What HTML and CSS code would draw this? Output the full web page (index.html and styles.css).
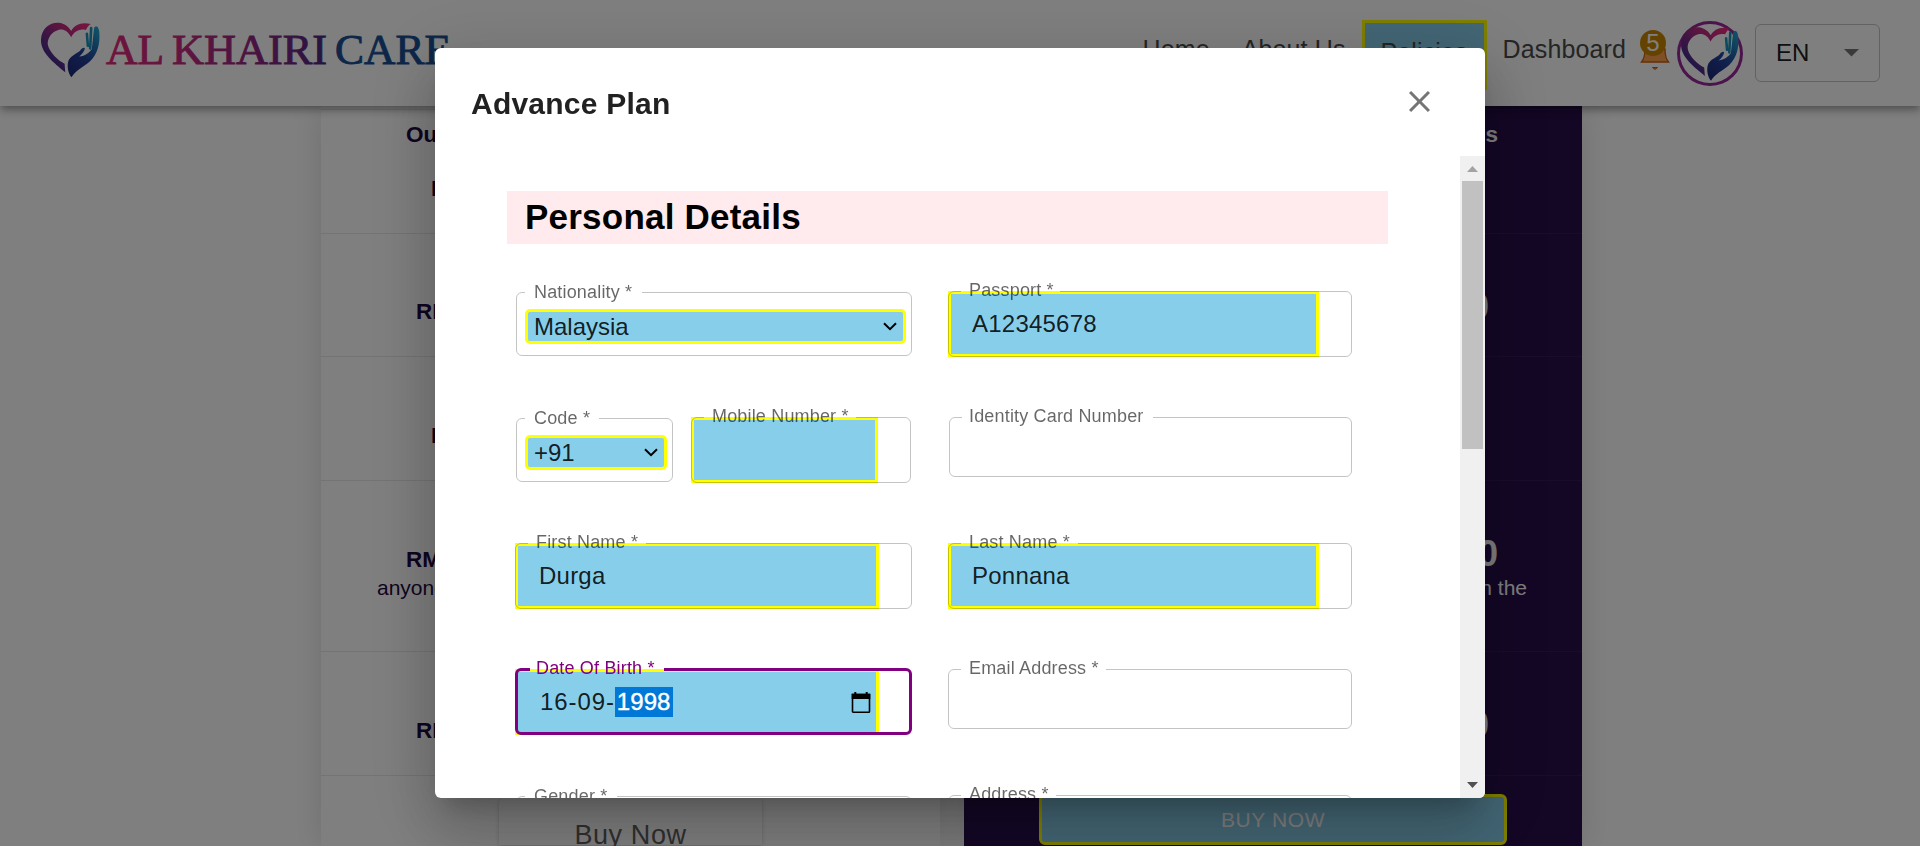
FILE: index.html
```html
<!DOCTYPE html>
<html lang="en">
<head>
<meta charset="utf-8">
<title>Al Khairi Care</title>
<link rel="stylesheet" href="styles.css">
</head>
<body>
<svg class="defs" width="0" height="0" aria-hidden="true">
  <defs>
    <linearGradient id="heart" x1="0.1" y1="0.9" x2="0.9" y2="0.1">
      <stop offset="0" stop-color="#24308e"/><stop offset=".42" stop-color="#7a2a88"/><stop offset=".65" stop-color="#b52a80"/><stop offset="1" stop-color="#e62a80"/>
    </linearGradient>
    <linearGradient id="hand" x1="0.2" y1="1" x2="0.8" y2="0">
      <stop offset="0" stop-color="#1f2a78"/><stop offset=".45" stop-color="#22409a"/><stop offset="1" stop-color="#1fa0cc"/>
    </linearGradient>
    <symbol id="mark" viewBox="28 26 186 174">
      <path fill="url(#heart)" d="M105 181C70 152 30 122 31 82C32 46 60 28 85 30C103 32 116 42 123 55C133 36 155 26 183 34C176 38 172 44 168 52C150 47 132 56 123 74C112 54 98 48 84 52C62 58 49 80 52 98C58 122 84 146 103 155Z"/>
      <path fill="url(#hand)" d="M124 196C114 184 110 165 114 148C118 132 138 125 150 115C155 107 163 103 165 108C163 118 157 125 148 133C165 131 178 122 186 110L193 46C198 38 208 40 209 62C211 92 205 125 180 148C160 165 138 174 124 196Z"/>
      <path fill="none" stroke="#1b93bd" stroke-width="8" stroke-linecap="round" d="M171 64L174 100M184 46L181 108"/>
    </symbol>
    <linearGradient id="word" gradientUnits="userSpaceOnUse" x1="0" y1="0" x2="346" y2="0">
      <stop offset="0" stop-color="#e02878"/><stop offset=".2" stop-color="#c82a80"/><stop offset=".5" stop-color="#802684"/><stop offset=".64" stop-color="#4a2a80"/><stop offset=".68" stop-color="#1c4f94"/><stop offset="1" stop-color="#1a4c90"/>
    </linearGradient>
  </defs>
</svg>

<header class="appbar">
  <div class="brand">
    <svg class="brand-mark"><use href="#mark"/></svg>
    <svg class="brand-name" viewBox="0 0 350 60">
      <g fill="url(#word)" stroke="url(#word)" stroke-width=".9">
        <text x="1" y="43" textLength="58" lengthAdjust="spacingAndGlyphs">AL</text>
        <text x="67" y="43" textLength="155" lengthAdjust="spacingAndGlyphs">KHAIRI</text>
        <text x="230" y="43" textLength="116" lengthAdjust="spacingAndGlyphs">CARE</text>
      </g>
    </svg>
  </div>
  <nav class="nav">
    <a class="nav-link">Home</a>
    <a class="nav-link">About Us</a>
    <a class="nav-link nav-active">Policies</a>
    <a class="nav-link">Dashboard</a>
    <div class="bell">
      <svg width="30" height="40" viewBox="0 0 30 40"><path d="M5 19Q5 28 1.500 32H28.500Q25 28 25 19Z" fill="#ffa04c" stroke="#c8600f" stroke-width="1.300"/><path d="M12.500 37.500h5q-2.500 3.500-5 0z" fill="#ffa04c" stroke="#c8600f"/></svg>
      <span class="badge">5</span>
    </div>
    <div class="avatar"><svg class="avatar-mark"><use href="#mark"/></svg></div>
    <div class="lang">EN<svg width="15" height="8" viewBox="0 0 15 8"><path d="M0 0h15L7.500 7.500z" fill="#757575"/></svg></div>
  </nav>
</header>

<main class="plans">
  <section class="plan plan-light">
    <div class="row row-first"><b>Our</b><b class="in-4">RM</b></div>
    <div class="row row-b"><b class="in-3">RM</b></div>
    <div class="row row-c"><b class="in-4">RM</b></div>
    <div class="row row-d"><b>RM</b><span class="note">anyone</span></div>
    <div class="row row-c"><b class="in-3">RM</b></div>
    <div class="row row-buy"><div class="buy-light">Buy Now</div></div>
  </section>
  <section class="plan plan-dark">
    <div class="row row-first"><b>s</b></div>
    <div class="row row-b"><b class="price in-r">0</b></div>
    <div class="row row-c"></div>
    <div class="row row-d"><b class="price">0</b><span class="note">in the</span></div>
    <div class="row row-c"><b class="price in-r">0</b></div>
    <div class="row row-buy"><div class="buy-dark">BUY NOW</div></div>
  </section>
</main>

<div class="backdrop">
  <div class="dialog" role="dialog">
    <div class="dialog-head">
      <h2 class="dialog-title">Advance Plan</h2>
      <svg class="close" width="21" height="21" viewBox="5 5 14 14"><path fill="#757575" d="M19 6.410L17.590 5 12 10.590 6.410 5 5 6.410 10.590 12 5 17.590 6.410 19 12 13.410 17.590 19 19 17.590 13.410 12z"/></svg>
    </div>
    <div class="dialog-body">
      <div class="content">
        <h3 class="band">Personal Details</h3>
        <div class="form">
          <div class="field select-field">
            <div class="select">Malaysia<svg class="chev" viewBox="0 0 14 9"><path d="M1 1.200l6 6 6-6"/></svg></div>
            <fieldset class="outline"><legend class="n-nat"></legend></fieldset>
            <label class="label">Nationality *</label>
          </div>
          <div class="field">
            <div class="input">A12345678</div>
            <fieldset class="outline"><legend class="n-pass"></legend></fieldset>
            <label class="label">Passport *</label>
          </div>

          <div class="pair">
            <div class="field select-field code">
              <div class="select">+91<svg class="chev" viewBox="0 0 14 9"><path d="M1 1.200l6 6 6-6"/></svg></div>
              <fieldset class="outline"><legend class="n-code"></legend></fieldset>
              <label class="label">Code *</label>
            </div>
            <div class="field mobile">
              <div class="input"></div>
              <fieldset class="outline"><legend class="n-mob"></legend></fieldset>
              <label class="label">Mobile Number *</label>
            </div>
          </div>
          <div class="field plain ident">
            <fieldset class="outline"><legend class="n-id"></legend></fieldset>
            <label class="label">Identity Card Number</label>
          </div>

          <div class="field left">
            <div class="input">Durga</div>
            <fieldset class="outline"><legend class="n-first"></legend></fieldset>
            <label class="label">First Name *</label>
          </div>
          <div class="field">
            <div class="input">Ponnana</div>
            <fieldset class="outline"><legend class="n-last"></legend></fieldset>
            <label class="label">Last Name *</label>
          </div>

          <div class="field left focused">
            <div class="input date"><span>16-09-</span><span class="picked">1998</span>
              <svg class="cal" width="20" height="21" viewBox="0 0 20 21"><path d="M1.500 2.500h17v17a.7.7 0 0 1-.7.7H2.200a.7.7 0 0 1-.7-.7z" fill="none" stroke="#000" stroke-width="1.600"/><path d="M.7 1.800h18.600v5.200H.7zM3.300 0h2v3h-2zM14.700 0h2v3h-2z"/></svg>
            </div>
            <fieldset class="outline"><legend class="n-dob"></legend></fieldset>
            <label class="label">Date Of Birth *</label>
          </div>
          <div class="field plain">
            <fieldset class="outline"><legend class="n-mail"></legend></fieldset>
            <label class="label">Email Address *</label>
          </div>

          <div class="field select-field">
            <fieldset class="outline"><legend class="n-gen"></legend></fieldset>
            <label class="label">Gender *</label>
          </div>
          <div class="field plain">
            <fieldset class="outline"><legend class="n-addr"></legend></fieldset>
            <label class="label">Address *</label>
          </div>
        </div>
      </div>
      <div class="scrollbar">
        <svg width="11" height="6" viewBox="0 0 11 6"><path d="M0 6L5.500 0 11 6z" fill="#a3a3a3"/></svg>
        <div class="thumb"></div>
        <svg class="down" width="11" height="6" viewBox="0 0 11 6"><path d="M0 0h11L5.500 6z" fill="#505050"/></svg>
      </div>
    </div>
  </div>
</div>
</body>
</html>
```
FILE: styles.css
```css
* { box-sizing: border-box; }

html, body { height: 846px; overflow: hidden; }

body {
  margin: 0;
  background: #fff;
  font-family: "Liberation Sans", Arial, sans-serif;
}

.defs { position: absolute; }

/* ---------- app bar ---------- */
.appbar {
  position: relative;
  z-index: 1;
  height: 106px;
  background: #fff;
  display: flex;
  justify-content: space-between;
  box-shadow: 0 3px 6px -1.5px rgba(0,0,0,.2), 0 6px 7.5px rgba(0,0,0,.14), 0 1.5px 15px rgba(0,0,0,.12);
}

.brand { display: flex; padding: 21px 0 0 40px; }
.brand-mark { width: 61px; height: 58px; }
.brand-name {
  width: 350px;
  height: 60px;
  margin: 0 0 0 4px;
  overflow: visible;
  font-family: "Liberation Serif", serif;
  font-size: 42px;
}

.nav { display: flex; align-items: flex-start; padding-right: 40px; }
.nav-link {
  font-size: 25px;
  line-height: 30px;
  letter-spacing: .12px;
  color: #4a4a4a;
  padding-top: 34px;
  margin-right: 32px;
}
.nav-active {
  border: 3px solid #ff0;
  background: #87ceeb;
  padding: 14px 16px 20px 16px;
  margin: 20px 16px 0 -16px;
}

.bell { position: relative; width: 30px; height: 40px; margin: 30px 7px 0 -18px; }
.badge {
  position: absolute;
  left: 0;
  top: 0;
  width: 26px;
  height: 26px;
  border-radius: 50%;
  background: #c98500;
  color: #fff;
  font-size: 24px;
  line-height: 26px;
  text-align: center;
}

.avatar {
  width: 66px;
  height: 65px;
  margin: 21px 12px 0 0;
  border: 3px solid #98289a;
  border-radius: 50%;
  display: flex;
  align-items: center;
  justify-content: center;
}
.avatar-mark { width: 60px; height: 56px; }

.lang {
  width: 125px;
  height: 58px;
  margin-top: 24px;
  padding: 0 20px;
  border: 1px solid #c4c4c4;
  border-radius: 6px;
  display: flex;
  align-items: center;
  justify-content: space-between;
  font-size: 24px;
  line-height: 56px;
  color: #212121;
}

/* ---------- plan columns ---------- */
.plans { display: flex; gap: 24px; padding: 3px 0 0 321px; }
.plan { width: 619px; height: 737px; box-shadow: 0 -3px 0 #fff, 0 0 30px rgba(0,0,0,.13); }
.plan-light { color: #1e0840; }
.plan-dark {
  width: 618px;
  background: #280e4c;
  box-shadow: 0 -3px 0 #280e4c, 0 0 30px rgba(0,0,0,.13);
  color: #fff;
}

.row {
  display: flex;
  flex-direction: column;
  border-top: 1px solid #e8e8e8;
  font-size: 22.5px;
  line-height: 24px;
  padding-left: 85px;
}
.plan-dark .row { border-color: #311957; padding: 0 84px 0 0; align-items: flex-end; }
.plan .row-first { height: 124px; padding-top: 13px; gap: 30px; }
.plan .row-b { height: 123px; padding-top: 66px; }
.plan .row-c { height: 124px; padding-top: 67px; }
.plan .row-d { height: 171px; padding-top: 67px; gap: 2px; }
.plan .row-buy { height: 70px; padding: 0; }
.plan-dark .row-b, .plan-dark .row-c, .plan-dark .row-d { padding-top: 53px; gap: 0; }
.in-3 { margin-left: 10px; }
.in-4 { margin-left: 25px; }
.in-r { margin-right: 9px; }
.price { font-size: 36px; line-height: 40px; }
.note { font-size: 21px; line-height: 28px; margin-left: -29px; }
.plan-dark .note { margin-right: -29px; }

.buy-light {
  width: 263px;
  height: 48px;
  margin: 21px 0 0 178px;
  border-radius: 6px 6px 0 0;
  box-shadow: 0 1px 4px rgba(0,0,0,.2);
  font-size: 27px;
  line-height: 30px;
  padding-top: 23px;
  letter-spacing: .6px;
  text-align: center;
  color: #606060;
}
.buy-dark {
  width: 468px;
  height: 53px;
  margin: 18px 75px 0 0;
  border: 3px solid #ff0;
  border-radius: 6px;
  background: #87ceeb;
  font-size: 21px;
  line-height: 45px;
  letter-spacing: .6px;
  text-align: center;
}

/* ---------- dialog ---------- */
.backdrop {
  position: fixed;
  inset: 0;
  z-index: 2;
  background: rgba(0,0,0,.5);
  padding-top: 48px;
}
.dialog {
  width: 1050px;
  height: 750px;
  margin: 0 auto;
  background: #fff;
  border-radius: 6px;
  overflow: hidden;
  box-shadow: 0 16.5px 22.5px -10.5px rgba(0,0,0,.2), 0 36px 57px 4.5px rgba(0,0,0,.14), 0 13.5px 69px 12px rgba(0,0,0,.12);
}
.dialog-head {
  height: 108px;
  padding: 0 55px 0 36px;
  display: flex;
  justify-content: space-between;
  align-items: center;
}
.dialog-title {
  margin: 3px 0 0;
  font-size: 30px;
  line-height: 48px;
  letter-spacing: .225px;
  color: #212121;
}
.close { margin-bottom: 1px; }
.dialog-body { display: flex; height: 642px; }
.content { flex: 1; padding: 35px 0 0 72px; }
.band {
  width: 881px;
  height: 53px;
  margin: 0;
  padding-left: 18px;
  background: #ffebee;
  font-size: 35px;
  line-height: 51px;
  letter-spacing: .22px;
  color: #000;
}
.form {
  display: grid;
  grid-template-columns: 397px 404px;
  grid-auto-rows: 66px;
  gap: 60px 36px;
  margin: 47px 0 0 8px;
}

/* ---------- fields ---------- */
.field { position: relative; }
.pair { display: flex; gap: 18px; }
.select-field { height: 64px; margin: 1px 0 0 1px; padding: 17px 0 0 9px; }
.code { width: 157px; }
.mobile { width: 220px; height: 66px; }
.plain { height: 60px; }
.ident { margin-left: 1px; }

.outline {
  position: absolute;
  inset: 0;
  min-width: 0;
  margin: 0;
  padding: 0;
  border: 1px solid rgba(0,0,0,.23);
  border-radius: 6px;
}
.outline legend { height: 1px; padding: 0; margin-left: 12px; }
.select-field .outline legend { margin-left: 8px; }
.focused .outline { border: 3px solid #800080; inset: -1px 0 0 0; }
.focused .outline legend { height: 3px; }
.n-nat { width: 117px; }
.n-pass { width: 99px; }
.n-code { width: 74px; }
.n-mob { width: 152px; }
.n-id { width: 191px; }
.n-first { width: 118px; }
.n-last { width: 117px; }
.n-dob { width: 134px; }
.n-mail { width: 145px; }
.n-gen { width: 92px; }
.n-addr { width: 95px; }

.label {
  position: absolute;
  left: 21px;
  top: -11px;
  font-size: 18px;
  line-height: 20px;
  letter-spacing: .17px;
  white-space: nowrap;
  color: rgba(0,0,0,.6);
}
.select-field .label { left: 18px; top: -10px; }
.ident .label { left: 20px; }
.focused .label { color: #800080; }

.input {
  width: 371px;
  height: 66px;
  border: 3px solid #ff0;
  background: #87ceeb;
  padding-left: 21px;
  font-size: 24px;
  line-height: 60px;
  letter-spacing: .225px;
  color: rgba(0,0,0,.87);
}
.left .input { width: 364px; }
.mobile .input { width: 187px; }
.date { display: flex; align-items: center; padding-left: 22px; letter-spacing: .9px; }
.picked {
  padding: 0 2px;
  line-height: 30px;
  background: #0078d7;
  color: #fff;
  -webkit-text-stroke: .4px #fff;
  letter-spacing: .1px;
}
.cal { margin: 0 5px 0 auto; }

.select {
  width: 381px;
  height: 35px;
  padding: 0 6px;
  border: 3px solid #ff0;
  border-radius: 5px;
  background: #87ceeb;
  display: flex;
  align-items: center;
  justify-content: space-between;
  font-size: 24px;
  line-height: 29px;
  color: rgba(0,0,0,.87);
}
.code .select { width: 142px; }
.chev { width: 14px; height: 9px; fill: none; stroke: #000; stroke-width: 2; }

/* ---------- scrollbar ---------- */
.scrollbar {
  width: 25px;
  background: #f0f0f0;
  display: flex;
  flex-direction: column;
  align-items: center;
  padding: 10px 0;
}
.thumb { width: 21px; height: 268px; margin-top: 9px; background: #c1c1c1; }
.down { margin-top: auto; }
```
